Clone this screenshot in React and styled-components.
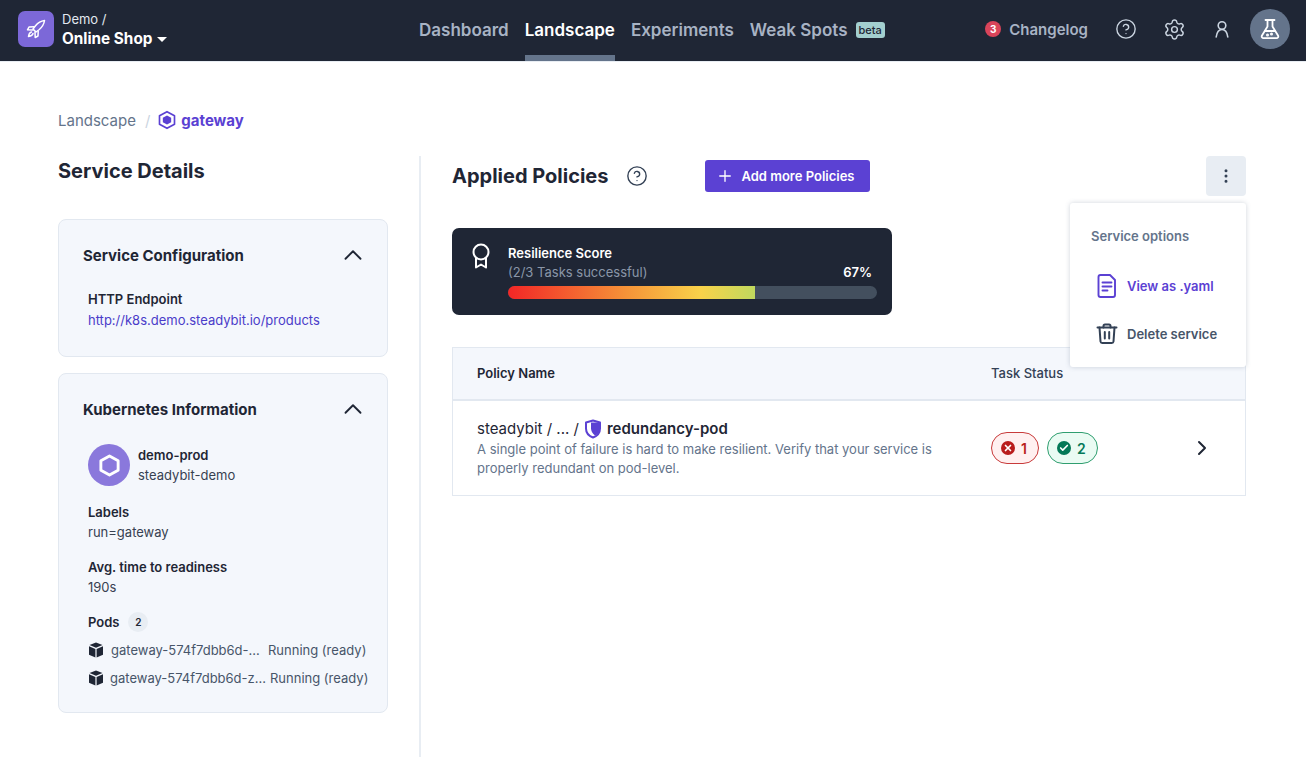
import React from 'react';
import styled, { createGlobalStyle } from 'styled-components';
import { ChevronUp, ChevronRight, Plus, Settings, MoreVertical, Check, X, CircleHelp } from 'lucide-react';

const Global = createGlobalStyle`
	html, body { margin: 0; padding: 0; background: #fff; }
	body { font-family: Inter, "Liberation Sans", sans-serif; color: #1f2635; overflow: hidden; }
	* { box-sizing: border-box; }
	svg { flex: none; }
`;

const Page = styled.div`
	width: 1306px;
	height: 757px;
	overflow: hidden;
	display: flex;
	flex-direction: column;
`;

const Header = styled.header`
	height: 61px;
	background: #1f2635;
	box-shadow: 0 1px 0 #e8edf3;
	flex: none;
	display: flex;
	align-items: center;
	padding: 0 16px 0 18px;
`;

const Brand = styled.div`
	width: 373px;
	display: flex;
	align-items: center;
	gap: 8px;
`;

const BrandLogo = styled.div`
	width: 36px;
	height: 36px;
	border-radius: 7px;
	background: #7c68d8;
	color: #fff;
	display: flex;
	align-items: center;
	justify-content: center;
	margin-top: -3px;
`;

const BrandText = styled.div`
	display: flex;
	flex-direction: column;
	margin-top: -4px;
`;

const BrandOrg = styled.div`
	font-size: 13px;
	line-height: 20px;
	color: #e2e8f0;
`;

const BrandName = styled.div`
	font-size: 15.3px;
	line-height: 20px;
	font-weight: 700;
	color: #fff;
	display: flex;
	align-items: center;
	gap: 5px;
`;

const Caret = styled.span`
	width: 0;
	height: 0;
	border-left: 5px solid transparent;
	border-right: 5px solid transparent;
	border-top: 5px solid #fff;
	margin-top: 2px;
`;

const Nav = styled.nav`
	display: flex;
	height: 61px;
	gap: 16px;
	margin-left: 28px;
`;

const NavItem = styled.a`
	height: 61px;
	display: flex;
	align-items: center;
	gap: 8px;
	font-size: 17px;
	font-weight: 600;
	padding-top: 4px;
	color: ${p => (p.$active ? '#fff' : '#a8b3c4')};
	border-bottom: 6px solid ${p => (p.$active ? '#64748b' : 'transparent')};
`;

const Beta = styled.span`
	background: #a3cfcf;
	color: #1f2635;
	font-size: 11px;
	font-weight: 500;
	line-height: 16px;
	padding: 0 3px;
	border-radius: 3px;
`;

const HeaderRight = styled.div`
	margin-left: auto;
	margin-top: -3px;
	display: flex;
	align-items: center;
`;

const Changelog = styled.div`
	display: flex;
	align-items: center;
	gap: 8px;
	font-size: 15px;
	font-weight: 600;
	color: #a8b3c4;
	margin-right: 14px;
`;

const Badge = styled.span`
	width: 16px;
	height: 16px;
	border-radius: 50%;
	background: #d9445a;
	color: #fff;
	font-size: 10px;
	font-weight: 700;
	display: flex;
	align-items: center;
	justify-content: center;
`;

const IconSlot = styled.div`
	width: 48px;
	display: flex;
	justify-content: center;
	color: #cbd5e1;
`;

const Avatar = styled.div`
	width: 40px;
	height: 40px;
	border-radius: 50%;
	background: #64748b;
	color: #fff;
	display: flex;
	align-items: center;
	justify-content: center;
	margin-left: 4px;
`;

const Body = styled.main`
	flex: 1;
	padding: 47px 60px 0 58px;
	display: flex;
	flex-direction: column;
	min-height: 0;
`;

const Crumbs = styled.div`
	display: flex;
	align-items: center;
	height: 24px;
	font-size: 15px;
	color: #64748b;
`;

const CrumbSep = styled.span`
	color: #cbd5e1;
	margin: 0 7px 0 9px;
`;

const CrumbCurrent = styled.span`
	color: #5b41d3;
	font-weight: 700;
	display: flex;
	align-items: center;
	gap: 4px;
`;

const Columns = styled.div`
	display: flex;
	flex: 1;
	margin-top: 24px;
	min-height: 0;
`;

const Left = styled.section`
	width: 363px;
	flex: none;
	padding-right: 31px;
	border-right: 2px solid #e8edf3;
`;

const Right = styled.section`
	flex: 1;
	padding-left: 31px;
	position: relative;
`;

const SideTitle = styled.h2`
	font-size: 20px;
	line-height: 30px;
	font-weight: 700;
	margin: 0 0 33px;
`;

const Card = styled.div`
	background: #f4f7fc;
	border: 1px solid #e2e8f0;
	border-radius: 8px;
	padding: 22px 19px 0 24px;
	height: ${p => p.$height}px;
	margin-bottom: 16px;
`;

const CardHead = styled.div`
	display: flex;
	justify-content: space-between;
	align-items: center;
	height: 26px;
	font-size: 15px;
	font-weight: 700;
	color: #1f2635;
	margin-bottom: ${p => p.$gap}px;
`;

const Block = styled.div`
	padding-left: 5px;
	margin-bottom: ${p => p.$gap || 0}px;
	font-size: 13px;
	line-height: 20px;
`;

const Label = styled.div`
	font-weight: 600;
	color: #1f2635;
`;

const Value = styled.div`
	color: #374151;
`;

const Link = styled.a`
	color: #4a3cc9;
	display: block;
	margin-top: 1px;
`;

const Cluster = styled.div`
	display: flex;
	align-items: center;
	gap: 8px;
	padding-left: 5px;
	margin-bottom: 16px;
	font-size: 13px;
	line-height: 20px;
`;

const ClusterIcon = styled.div`
	width: 42px;
	height: 42px;
	border-radius: 50%;
	background: #8a78dc;
	color: #fff;
	display: flex;
	align-items: center;
	justify-content: center;
`;

const PodsHead = styled.div`
	display: flex;
	align-items: center;
	gap: 9px;
	font-weight: 600;
	margin-bottom: 4px;
`;

const Count = styled.span`
	width: 20px;
	height: 20px;
	border-radius: 50%;
	background: #e8edf3;
	font-size: 10px;
	font-weight: 600;
	display: flex;
	align-items: center;
	justify-content: center;
`;

const Pod = styled.div`
	display: flex;
	align-items: center;
	height: 28px;
	color: #475569;
	white-space: nowrap;
`;

const PodName = styled.span`
	width: ${p => p.$width}px;
	margin-left: ${p => p.$offset}px;
	flex: none;
`;

const TitleRow = styled.div`
	display: flex;
	align-items: center;
	height: 40px;
`;

const MainTitle = styled.h2`
	font-size: 20px;
	font-weight: 700;
	margin: -1px 18px 0 0;
`;

const PrimaryButton = styled.button`
	height: 32px;
	width: 165px;
	margin-left: 57px;
	padding: 0 0 0 11px;
	border: 0;
	border-radius: 3px;
	background: #5b41d3;
	color: #fff;
	font: 600 13px Inter, sans-serif;
	display: flex;
	align-items: center;
	gap: 7px;
`;

const MoreButton = styled.button`
	margin-left: auto;
	width: 40px;
	height: 40px;
	border: 0;
	border-radius: 4px;
	background: #e8edf3;
	color: #334155;
	display: flex;
	align-items: center;
	justify-content: center;
`;

const Menu = styled.div`
	position: absolute;
	top: 47px;
	right: 0;
	width: 176px;
	height: 164px;
	background: #fff;
	border-radius: 3px;
	box-shadow: 0 0 5px rgba(100, 116, 139, 0.3);
	padding: 24px 21px 0;
	z-index: 2;
`;

const MenuTitle = styled.div`
	font-size: 13px;
	font-weight: 600;
	line-height: 18px;
	color: #64748b;
	margin-bottom: 17px;
`;

const MenuItem = styled.div`
	display: flex;
	align-items: center;
	gap: 7px;
	height: 48px;
	margin-left: 3px;
	font-size: 13px;
	font-weight: 600;
	white-space: nowrap;
	color: ${p => (p.$primary ? '#5b41d3' : '#475569')};
	svg { color: ${p => (p.$primary ? '#5b41d3' : '#334155')}; }
`;

const Score = styled.div`
	width: 440px;
	height: 87px;
	margin-top: 32px;
	background: #1f2635;
	border-radius: 7px;
	padding: 15px 15px 0 18px;
	display: flex;
	gap: 16px;
	color: #fff;
`;

const ScoreBody = styled.div`
	flex: 1;
`;

const ScoreTitle = styled.div`
	font-size: 13px;
	line-height: 20px;
	font-weight: 600;
`;

const ScoreRow = styled.div`
	display: flex;
	justify-content: space-between;
	font-size: 13px;
	line-height: 19px;
	color: #8a96a8;
	padding-right: 5px;
	strong { color: #fff; font-weight: 600; }
`;

const Track = styled.div`
	height: 13px;
	border-radius: 7px;
	background: #434f5e;
	margin-top: 4px;
	overflow: hidden;
`;

const Fill = styled.div`
	height: 100%;
	background: linear-gradient(90deg, #f22626 0%, #f59338 48%, #f9d24a 78%, #c0d95e 100%);
`;

const Table = styled.div`
	margin-top: 32px;
	border: 1px solid #e2e8f0;
`;

const TableHead = styled.div`
	height: 53px;
	background: #f4f7fc;
	border-bottom: 2px solid #e2e8f0;
	display: flex;
	align-items: center;
	padding: 0 0 2px 24px;
	font-size: 13px;
`;

const HeadCell = styled.span`
	width: ${p => p.$width}px;
	font-weight: ${p => (p.$strong ? 600 : 500)};
	color: ${p => (p.$strong ? '#1f2635' : '#334155')};
`;

const TableRow = styled.div`
	height: 94px;
	display: flex;
	align-items: center;
	padding: 0 31px 0 24px;
`;

const PolicyInfo = styled.div`
	width: 514px;
	flex: none;
`;

const PolicyName = styled.div`
	display: flex;
	align-items: center;
	gap: 5px;
	font-size: 15px;
	line-height: 22px;
	strong { font-weight: 600; }
`;

const PolicyDesc = styled.div`
	font-size: 13px;
	line-height: 19.5px;
	color: #64748b;
	width: 470px;
`;

const Pills = styled.div`
	display: flex;
	gap: 8px;
	flex: 1;
`;

const Pill = styled.div`
	height: 32px;
	border-radius: 16px;
	border: 1px solid ${p => (p.$ok ? '#2f9e6f' : '#c83a3a')};
	background: ${p => (p.$ok ? '#eafbf3' : '#fff0f0')};
	color: ${p => (p.$ok ? '#047857' : '#b91c1c')};
	display: flex;
	align-items: center;
	gap: 3px;
	padding: 0 11px 0 9px;
	font-size: 14px;
	font-weight: 600;
`;

const PillDot = styled.span`
	width: 14px;
	height: 14px;
	border-radius: 50%;
	background: ${p => (p.$ok ? '#047857' : '#b91c1c')};
	color: #fff;
	display: flex;
	align-items: center;
	justify-content: center;
	margin-right: 3px;
`;

const Hexagon = ({ size = 18, stroke = 2, dot }) => (
	<svg width={size} height={size} viewBox="0 0 24 24" fill="none">
		<path d="M12 2l9 5v10l-9 5-9-5V7z" stroke="currentColor" strokeWidth={stroke} strokeLinejoin="round" />
		{dot && <path d="M12 6.5l5 2.8v5.400l-5 2.800-5-2.800V9.300z" fill="currentColor" />}
	</svg>
);

const RocketIcon = () => (
	<svg width="22" height="22" viewBox="0 0 22 22" fill="none" stroke="currentColor" strokeWidth="1.5" strokeLinejoin="round" strokeLinecap="round">
		<path d="M19.5 2.500c-3.500.5-6.500 2.300-9 5.200l-2.500 3.300 3 3 3.300-2.500c2.900-2.500 4.700-5.500 5.200-9z" />
		<path d="M8.800 8.800l-4.800.2-1.500 2.800 5.500.2" />
		<path d="M13.200 13.200l-.2 4.800-2.800 1.500-.2-5.500" />
		<path d="M6.500 14c-1.500.3-2.500 1.500-3 4.500 3-.5 4.200-1.500 4.500-3" />
	</svg>
);

const FlaskIcon = () => (
	<svg width="22" height="22" viewBox="0 0 22 22" fill="none" stroke="currentColor" strokeWidth="1.8" strokeLinejoin="round" strokeLinecap="round">
		<path d="M6.500 2h9" />
		<path d="M8.500 2v6.500L3 17.500c-.8 1.400.2 2.700 1.500 2.700h13c1.300 0 2.300-1.300 1.500-2.700L13.500 8.500V2" />
		<path d="M5.800 13h10.400" />
		<circle cx="12.500" cy="16" r=".6" fill="currentColor" />
		<circle cx="8.500" cy="17" r=".6" fill="currentColor" />
	</svg>
);

const UserIcon = () => (
	<svg width="20" height="20" viewBox="0 0 20 20" fill="none" stroke="currentColor" strokeWidth="1.6" strokeLinecap="round">
		<circle cx="10" cy="6.500" r="3.800" />
		<path d="M4.200 18c.6-4.500 2.700-7.500 5.800-7.500s5.200 3 5.800 7.500" />
	</svg>
);

const RibbonIcon = () => (
	<svg width="22" height="26" viewBox="0 0 22 26" fill="none" stroke="#fff" strokeWidth="2" strokeLinejoin="round">
		<circle cx="11" cy="9" r="7.500" />
		<path d="M6 15v9.500l5-3 5 3V15" />
	</svg>
);

const DocIcon = () => (
	<svg width="26" height="26" viewBox="0 0 26 26" fill="none" stroke="currentColor" strokeWidth="1.9" strokeLinecap="round" strokeLinejoin="round">
		<path d="M6.500 2h9.500l5 5v15c0 1.100-.9 2-2 2H6.500c-1.100 0-2-.9-2-2V4c0-1.100.9-2 2-2z" />
		<path d="M8.500 9.500h9M8.500 13.500h9M8.500 17.500h5" />
	</svg>
);

const TrashIcon = () => (
	<svg width="26" height="26" viewBox="0 0 26 26" fill="none" stroke="currentColor" strokeWidth="2" strokeLinecap="round" strokeLinejoin="round">
		<path d="M3.500 6.500h19" />
		<path d="M9.500 6.500V5c0-1 .7-1.500 1.500-1.500h4c.8 0 1.500.5 1.500 1.500v1.500" />
		<path d="M5.500 6.500l1 14c.1 1 .8 1.500 1.700 1.500h9.600c.9 0 1.600-.5 1.700-1.500l1-14" />
		<path d="M10.800 11v6.500M15.200 11v6.500" />
	</svg>
);

const ShieldIcon = () => (
	<svg width="18" height="20" viewBox="0 0 18 20" fill="none">
		<path d="M9 1.500L2 3.500v6c0 4.500 3 7.500 7 9 4-1.500 7-4.500 7-9v-6z" stroke="#5b41d3" strokeWidth="2" strokeLinejoin="round" />
		<path d="M7 3.500h9v6c0 3-1.500 5.500-5 7-2.500-2-4-4.500-4-7z" fill="#5b41d3" />
	</svg>
);

const CubeIcon = () => (
	<svg width="16" height="16" viewBox="0 0 16 16" fill="#1f2635">
		<path d="M8 .5l6.500 2.600L8 5.700 1.500 3.100z" />
		<path d="M1 4.300l6.400 2.600v8.500L1 12.700z" />
		<path d="M15 4.300L8.600 6.900v8.500l6.400-2.700z" />
	</svg>
);

const pods = [
	{ name: 'gateway-574f7dbb6d-...', offset: 7, width: 157 },
	{ name: 'gateway-574f7dbb6d-z...', offset: 6, width: 160 },
];

export default function App() {
	return (
		<Page>
			<Global />
			<Header>
				<Brand>
					<BrandLogo><RocketIcon /></BrandLogo>
					<BrandText>
						<BrandOrg>Demo /</BrandOrg>
						<BrandName>Online Shop <Caret /></BrandName>
					</BrandText>
				</Brand>
				<Nav>
					<NavItem>Dashboard</NavItem>
					<NavItem $active>Landscape</NavItem>
					<NavItem>Experiments</NavItem>
					<NavItem>Weak Spots <Beta>beta</Beta></NavItem>
				</Nav>
				<HeaderRight>
					<Changelog><Badge>3</Badge> Changelog</Changelog>
					<IconSlot><CircleHelp size={22} strokeWidth={1.5} /></IconSlot>
					<IconSlot><Settings size={23} strokeWidth={1.5} /></IconSlot>
					<IconSlot><UserIcon /></IconSlot>
					<Avatar><FlaskIcon /></Avatar>
				</HeaderRight>
			</Header>
			<Body>
				<Crumbs>
					Landscape
					<CrumbSep>/</CrumbSep>
					<CrumbCurrent><Hexagon size={20} dot />gateway</CrumbCurrent>
				</Crumbs>
				<Columns>
					<Left>
						<SideTitle>Service Details</SideTitle>
						<Card $height={138}>
							<CardHead $gap={21}>Service Configuration <ChevronUp size={30} strokeWidth={1.5} /></CardHead>
							<Block>
								<Label>HTTP Endpoint</Label>
								<Link>http://k8s.demo.steadybit.io/products</Link>
							</Block>
						</Card>
						<Card $height={340}>
							<CardHead $gap={22}>Kubernetes Information <ChevronUp size={30} strokeWidth={1.5} /></CardHead>
							<Cluster>
								<ClusterIcon><Hexagon size={23} stroke={3} /></ClusterIcon>
								<div>
									<Label>demo-prod</Label>
									<Value>steadybit-demo</Value>
								</div>
							</Cluster>
							<Block $gap={15}>
								<Label>Labels</Label>
								<Value>run=gateway</Value>
							</Block>
							<Block $gap={15}>
								<Label>Avg. time to readiness</Label>
								<Value>190s</Value>
							</Block>
							<Block>
								<PodsHead>Pods <Count>2</Count></PodsHead>
								{pods.map(pod => (
									<Pod key={pod.name}>
										<CubeIcon />
										<PodName $width={pod.width} $offset={pod.offset}>{pod.name}</PodName>
										Running (ready)
									</Pod>
								))}
							</Block>
						</Card>
					</Left>
					<Right>
						<TitleRow>
							<MainTitle>Applied Policies</MainTitle>
							<CircleHelp size={22} strokeWidth={1.5} color="#334155" />
							<PrimaryButton><Plus size={18} strokeWidth={1.8} />Add more Policies</PrimaryButton>
							<MoreButton><MoreVertical size={18} /></MoreButton>
						</TitleRow>
						<Menu>
							<MenuTitle>Service options</MenuTitle>
							<MenuItem $primary><DocIcon />View as .yaml</MenuItem>
							<MenuItem><TrashIcon />Delete service</MenuItem>
						</Menu>
						<Score>
							<RibbonIcon />
							<ScoreBody>
								<ScoreTitle>Resilience Score</ScoreTitle>
								<ScoreRow>(2/3 Tasks successful)<strong>67%</strong></ScoreRow>
								<Track><Fill style={{ width: '67%' }} /></Track>
							</ScoreBody>
						</Score>
						<Table>
							<TableHead>
								<HeadCell $width={514} $strong>Policy Name</HeadCell>
								<HeadCell>Task Status</HeadCell>
							</TableHead>
							<TableRow>
								<PolicyInfo>
									<PolicyName>steadybit / ... / <ShieldIcon /><strong>redundancy-pod</strong></PolicyName>
									<PolicyDesc>A single point of failure is hard to make resilient. Verify that your service is properly redundant on pod-level.</PolicyDesc>
								</PolicyInfo>
								<Pills>
									<Pill><PillDot><X size={10} strokeWidth={4} /></PillDot>1</Pill>
									<Pill $ok><PillDot $ok><Check size={10} strokeWidth={4} /></PillDot>2</Pill>
								</Pills>
								<ChevronRight size={24} strokeWidth={2} />
							</TableRow>
						</Table>
					</Right>
				</Columns>
			</Body>
		</Page>
	);
}
